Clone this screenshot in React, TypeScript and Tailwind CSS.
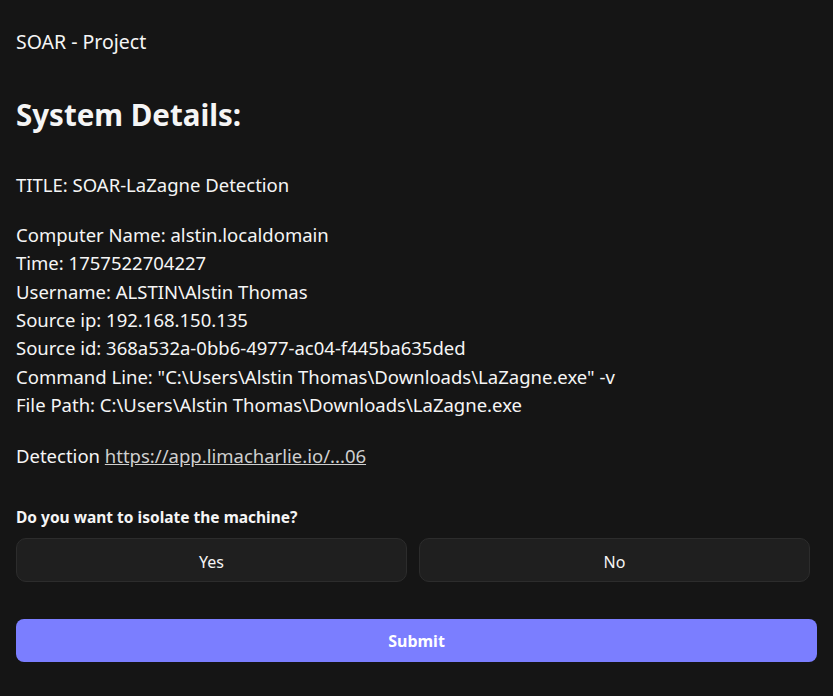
import React from "react";

export default function App() {
  const lines = [
    "Computer Name: alstin.localdomain",
    "Time: 1757522704227",
    "Username: ALSTIN\\Alstin Thomas",
    "Source ip: 192.168.150.135",
    "Source id: 368a532a-0bb6-4977-ac04-f445ba635ded",
    'Command Line: "C:\\Users\\Alstin Thomas\\Downloads\\LaZagne.exe" -v',
    "File Path: C:\\Users\\Alstin Thomas\\Downloads\\LaZagne.exe",
  ];
  return (
    <div
      className="min-h-[696px] w-full bg-[#151515] text-[#f5f5f5] px-4 pt-[28px]"
      style={{ fontFamily: '"Noto Sans", "Open Sans", sans-serif' }}
    >
      <div className="h-[28px] leading-[28px] text-[19.5px]">SOAR - Project</div>
      <h1 className="mt-[39px] h-[40px] leading-[40px] text-[29.5px] font-bold">System Details:</h1>
      <div className="mt-[36px] h-[28px] leading-[28px] text-[18.5px]">TITLE: SOAR-LaZagne Detection</div>
      <div className="mt-[22px] text-[18.5px] leading-[28.33px]">
        {lines.map((l) => (
          <div key={l} className="whitespace-nowrap">{l}</div>
        ))}
      </div>
      <div className="mt-[23px] h-[28px] leading-[28px] text-[18.5px]">
        Detection{" "}
        <a href="#" className="text-[#cfcfcf] underline">
          https://app.limacharlie.io/...06
        </a>
      </div>
      <div className="mt-[35px] h-[24px] leading-[24px] text-[15.5px] font-bold">
        Do you want to isolate the machine?
      </div>
      <div className="mt-[9px] flex gap-3 w-[794px]">
        <button className="flex-1 h-[44px] pt-[3px] rounded-[10px] bg-[#1f1f1f] border border-[#2c2c2c] text-[16px] text-[#f5f5f5]">
          Yes
        </button>
        <button className="flex-1 h-[44px] pt-[3px] rounded-[10px] bg-[#1f1f1f] border border-[#2c2c2c] text-[16px] text-[#f5f5f5]">
          No
        </button>
      </div>
      <button className="mt-[37px] w-full h-[43px] rounded-[8px] bg-[#7b7eff] text-white text-[16px] font-bold">
        Submit
      </button>
    </div>
  );
}
